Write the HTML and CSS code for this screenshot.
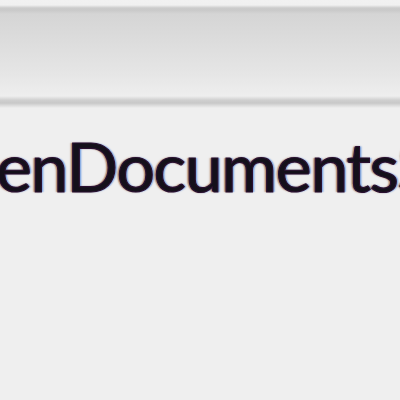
FILE: index.html
```html
<!DOCTYPE html>
<html>
<head>
<meta charset="utf-8">
<link rel="stylesheet" href="styles.css">
</head>
<body>
<div class="window">
  <div class="toolbar"></div>
  <div class="content">
    <div class="path">enDocumentsS</div>
  </div>
</div>
</body>
</html>
```
FILE: styles.css
```css
html, body {
  margin: 0;
  padding: 0;
  background: #efefef;
}
.window {
  width: 400px;
  height: 400px;
  overflow: hidden;
  display: flex;
  flex-direction: column;
}
.toolbar {
  height: 108px;
  flex: none;
  background: linear-gradient(to bottom,
    #f1f1f1 0px, #f0f0f0 5px, #cbcbcb 8px, #c9c9c9 10px, #d5d5d5 14px,
    #dcdcdc 40px, #e6e6e6 75px, #eeeeee 96px, #d0d0d0 100px, #c8c8c8 103px,
    #d8d8d8 105px, #efefef 108px);
}
.content {
  flex: 1;
  padding-top: 18px;
  overflow: hidden;
}
.path {
  font-family: "Lato", "Noto Sans", sans-serif;
  font-size: 68px;
  line-height: 80px;
  color: #14101a;
  white-space: nowrap;
  margin-left: -4px;
  letter-spacing: -1.35px;
  -webkit-text-stroke: 1.2px #2a1030;
  text-shadow: -2px 0 1.5px rgba(140,60,0,0.55), 2px 0 1.5px rgba(0,90,220,0.45), 0 0 1.5px rgba(40,20,60,0.5);
}
```
